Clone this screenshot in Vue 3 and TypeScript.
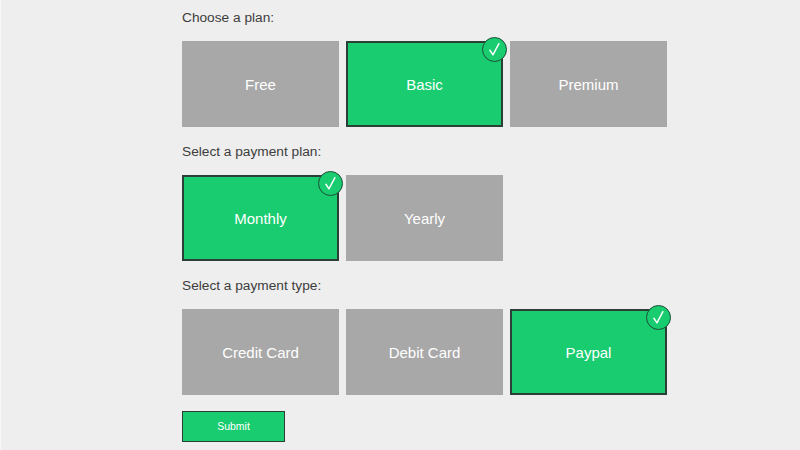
<script setup lang="ts">
interface Group { title: string; options: { name: string; selected?: boolean }[] }
const groups: Group[] = [
  { title: 'Choose a plan:', options: [{ name: 'Free' }, { name: 'Basic', selected: true }, { name: 'Premium' }] },
  { title: 'Select a payment plan:', options: [{ name: 'Monthly', selected: true }, { name: 'Yearly' }] },
  { title: 'Select a payment type:', options: [{ name: 'Credit Card' }, { name: 'Debit Card' }, { name: 'Paypal', selected: true }] },
]
</script>

<template>
  <div class="page">
    <form class="form" @submit.prevent>
      <section v-for="g in groups" :key="g.title" class="group">
        <h2 class="title">{{ g.title }}</h2>
        <div class="options">
          <div v-for="o in g.options" :key="o.name" class="card" :class="{ selected: o.selected }">
            {{ o.name }}
            <span v-if="o.selected" class="badge">
              <svg viewBox="0 0 24 24" width="23" height="23" fill="none" stroke="#fff" stroke-width="1.5" stroke-linecap="round" stroke-linejoin="round">
                <path d="M7.2 12.8 L10.4 17.6 L16.6 5.8" />
              </svg>
            </span>
          </div>
        </div>
      </section>
      <button class="submit" type="submit">Submit</button>
    </form>
  </div>
</template>

<style>
html, body { margin: 0; background: #eeeeee; }
</style>

<style scoped>
.page {
  width: 800px;
  height: 450px;
  box-sizing: border-box;
  background: #eeeeee;
  border-left: 1px solid #f7f7f7;
  padding-left: 181px;
  overflow: hidden;
  font-family: "Liberation Sans", Arial, sans-serif;
}
.form { display: flex; flex-direction: column; width: 485px; }
.group { display: flex; flex-direction: column; }
.title {
  margin: 0;
  height: 41px;
  padding-top: 9px;
  box-sizing: border-box;
  font-size: 13.7px;
  font-weight: 400;
  line-height: 18px;
  color: #3d3d3d;
}
.group + .group .title { height: 48px; padding-top: 16px; }
.options { display: flex; gap: 7px; }
.card {
  position: relative;
  width: 157px;
  height: 86px;
  box-sizing: border-box;
  display: flex;
  align-items: center;
  justify-content: center;
  background: #a8a8a8;
  color: #fff;
  font-size: 15px;
}
.card.selected {
  background: #18cc6f;
  border: 2px solid #2c3f36;
}
.badge {
  position: absolute;
  top: -6px;
  right: -6px;
  width: 25px;
  height: 25px;
  box-sizing: border-box;
  border-radius: 50%;
  background: #18cc6f;
  border: 1.5px solid #1e4d37;
  display: flex;
  align-items: center;
  justify-content: center;
}
.submit {
  margin-top: 16px;
  width: 103px;
  height: 31px;
  padding: 0 0 2px;
  box-sizing: border-box;
  background: #18cc6f;
  border: 1px solid #2c3f36;
  color: #fff;
  font-family: inherit;
  font-size: 10.5px;
}
</style>
